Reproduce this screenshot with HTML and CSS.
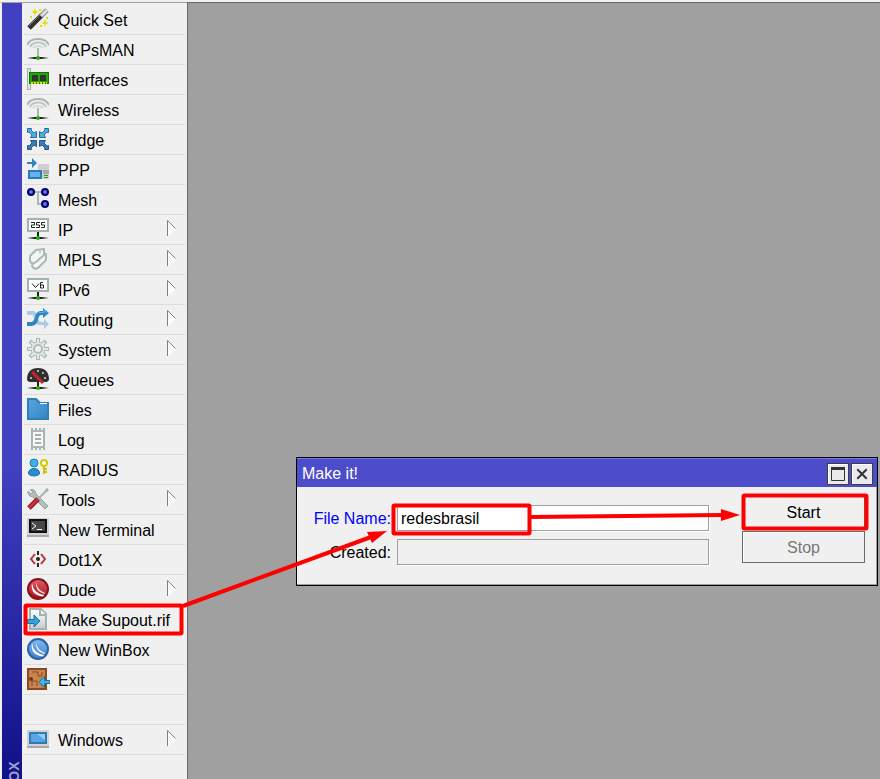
FILE: index.html
```
<!DOCTYPE html>
<html lang="en">
<head>
  <meta charset="UTF-8">
  <meta name="viewport" content="width=device-width, initial-scale=1.0">
  <title>WinBox - Make Supout.rif</title>
  <link rel="stylesheet" href="styles.css">
</head>
<body>
  <!-- shared shapes -->
  <svg class="defs" aria-hidden="true">
    <defs>
      <linearGradient id="base" x1="0" x2="1" y1="0" y2="0">
        <stop offset="0" stop-color="#222" stop-opacity="0"/>
        <stop offset=".35" stop-color="#222"/>
        <stop offset=".65" stop-color="#222"/>
        <stop offset="1" stop-color="#222" stop-opacity="0"/>
      </linearGradient>
      <linearGradient id="blue" x1="0" x2="1" y1="0" y2="1">
        <stop offset="0" stop-color="#5aa5e0"/>
        <stop offset="1" stop-color="#3484c4"/>
      </linearGradient>
      <linearGradient id="paper" x1="0" x2="0" y1="0" y2="1">
        <stop offset="0" stop-color="#fff"/>
        <stop offset="1" stop-color="#c4cccb"/>
      </linearGradient>
      <radialGradient id="node">
        <stop offset="0" stop-color="#9aa0ff"/>
        <stop offset=".5" stop-color="#3038b0"/>
        <stop offset=".6" stop-color="#000070"/>
        <stop offset="1" stop-color="#000070"/>
      </radialGradient>
      <linearGradient id="redball" x1="0" x2="0" y1="0" y2="1">
        <stop offset="0" stop-color="#e0606c"/>
        <stop offset="1" stop-color="#a80c1c"/>
      </linearGradient>
      <linearGradient id="blueball" x1="0" x2="0" y1="0" y2="1">
        <stop offset="0" stop-color="#84b8f0"/>
        <stop offset="1" stop-color="#3c80d0"/>
      </linearGradient>
      <symbol id="stand" viewBox="0 0 22 22">
        <rect x="0" y="19" width="22" height="2" fill="url(#base)"/>
        <circle cx="11" cy="20" r="2" fill="#1fae0c"/>
      </symbol>
      <symbol id="antenna" viewBox="0 0 22 22">
        <path d="M0 7Q3 1 11 1T22 7" fill="none" stroke="#a9b5b3" stroke-width="2"/>
        <path d="M3 9Q5 4.500 11 4.500T19 9" fill="none" stroke="#bcc6c4" stroke-width="2"/>
        <path d="M6 10Q8 8 11 8T16 10" fill="none" stroke="#d5dad9" stroke-width="2"/>
        <path d="M11 10v9" stroke="#a9b8b4" stroke-width="2"/>
        <use href="#stand"/>
      </symbol>
      <symbol id="swirl" viewBox="0 0 22 22">
        <path d="M5 5Q6 15 17 17L16 18.500Q3 17 5 5Z" fill="#fff"/>
        <path d="M9 4Q10 12 18 15L17.500 16Q8 13.500 9 4Z" fill="#fff" opacity=".9"/>
      </symbol>
      <symbol id="arrow" viewBox="0 0 9 17">
        <path d="M1 1L9 9L1 16Z" fill="#fcfcfc"/>
        <path d="M.5 16V.5L8.500 8.500" fill="none" stroke="#808080"/>
      </symbol>
    </defs>
  </svg>

  <div class="app">
    <aside class="rail"><span class="rail-name">WINBOX</span></aside>

    <nav class="menu">
      <a class="item" href="#">
        <svg class="icon" viewBox="0 0 22 22"><path d="M2 20L15 7" stroke="#303030" stroke-width="5"/><path d="M2 18L14 6" stroke="#777" stroke-width="1"/><path d="M14 8L20 2" stroke="#888" stroke-width="5"/><path d="M14 8L20 2" stroke="#dedede" stroke-width="3"/><path d="M8 0l1 3 3 1-3 1-1 3-1-3-3-1 3-1ZM18 11l1 3 3 1-3 1-1 3-1-3-3-1 3-1Z" fill="#dce000"/><path d="M12 1h2v2h-2ZM3 8h2v2h-2ZM19 9h2v2h-2ZM13 17h2v2h-2Z" fill="#dce000"/></svg>
        <span class="label">Quick Set</span>
      </a>
      <a class="item" href="#">
        <svg class="icon"><use href="#antenna"/></svg>
        <span class="label">CAPsMAN</span>
      </a>
      <a class="item" href="#">
        <svg class="icon" viewBox="0 0 22 22"><rect x=".5" y=".5" width="3" height="21" fill="#e0e5e4" stroke="#a4b2af"/><rect x="2.500" y="4.500" width="19" height="11" fill="#20a40c" stroke="#107800"/><path d="M5 7h6v6H5ZM13 7h6v6h-6Z" fill="#333"/><path d="M4 15h16" stroke="#e5d820" stroke-width="2" stroke-dasharray="2 1"/></svg>
        <span class="label">Interfaces</span>
      </a>
      <a class="item" href="#">
        <svg class="icon"><use href="#antenna"/></svg>
        <span class="label">Wireless</span>
      </a>
      <a class="item" href="#">
        <svg class="icon" viewBox="0 0 22 22"><g fill="#4ab0e8" stroke="#2a6b9c"><path d="M.5.5H4.500L4 2L7 5L9.500 3.500V9.500H3.500L5 7L2 4L.5 4.500Z"/><path d="M21.500.5H17.500L18 2L15 5L12.500 3.500V9.500H18.500L17 7L20 4L21.500 4.500Z"/></g><g fill="#3a7cb4" stroke="#245a88"><path d="M.5 21.500H4.500L4 20L7 17L9.500 18.500V12.500H3.500L5 15L2 18L.5 17.500Z"/><path d="M21.500 21.500H17.500L18 20L15 17L12.500 18.500V12.500H18.500L17 15L20 18L21.500 17.500Z"/></g></svg>
        <span class="label">Bridge</span>
      </a>
      <a class="item" href="#">
        <svg class="icon" viewBox="0 0 22 22"><path d="M11 6h11v15H11Z" fill="#d0d0d0"/><path d="M16 12h6v4h-6Z" fill="#a8a8a8"/><path d="M17 17.500h4M17 19.500h4" stroke="#20a010" stroke-width="1"/><path d="M0 4h5V0l5 5-5 5V6H0Z" fill="#2f86bd"/><rect x="1" y="12" width="14" height="9" fill="#2d7cb1"/><rect x="3" y="14" width="10" height="5" fill="#65b1ee"/></svg>
        <span class="label">PPP</span>
      </a>
      <a class="item" href="#">
        <svg class="icon" viewBox="0 0 22 22"><path d="M4 4h14M11 4v12h7" fill="none" stroke="#aab9b5" stroke-width="2"/><g fill="url(#node)"><circle cx="4" cy="4" r="4"/><circle cx="18" cy="4" r="4"/><circle cx="18" cy="16" r="4"/></g></svg>
        <span class="label">Mesh</span>
      </a>
      <a class="item" href="#">
        <svg class="icon" viewBox="0 0 22 22"><rect x="1" y="1" width="20" height="12" fill="#fff" stroke="#a4b3af" stroke-width="2"/><path d="M4 4.500h3.500v2.500h-3v2.500H8M13 4.500H9.500v2.500H12.500v2.500H9M18 4.500H14.500v2.500h3v2.500H14" fill="none" stroke="#222"/><path d="M11 14v5" stroke="#222" stroke-width="2"/><use href="#stand"/></svg>
        <span class="label">IP</span>
        <svg class="sub"><use href="#arrow"/></svg>
      </a>
      <a class="item" href="#">
        <svg class="icon" viewBox="0 0 22 22"><g fill="#f4f6f6" stroke="#a9b8b4" stroke-width="2" stroke-linejoin="round"><path d="M7 12L14 5L19 6V12L12 19Q8 23 5 18Z"/><path d="M3 8L9 2L17 1V7L9 14Q5 17 3 13Z"/></g><circle cx="13" cy="4" r="1" fill="#a9b8b4"/></svg>
        <span class="label">MPLS</span>
        <svg class="sub"><use href="#arrow"/></svg>
      </a>
      <a class="item" href="#">
        <svg class="icon" viewBox="0 0 22 22"><rect x="1" y="1" width="20" height="12" fill="#fff" stroke="#a4b3af" stroke-width="2"/><path d="M5 5.500l3.500 4 3.500-4M16 4.500H13.500v5.500H16.500V7H13.500" fill="none" stroke="#222"/><path d="M11 14v5" stroke="#222" stroke-width="2"/><use href="#stand"/></svg>
        <span class="label">IPv6</span>
        <svg class="sub"><use href="#arrow"/></svg>
      </a>
      <a class="item" href="#">
        <svg class="icon" viewBox="0 0 22 22"><path d="M0 3H6Q9 3 10 8T14 14H17V11L22 16L17 21V17H13Q8 17 7 11T4 7H0Z" fill="#a9cbe3"/><path d="M0 14H4Q7 14 8 9T13 3H16V0L22 5L16 10V7H14Q12 7 11 12T5 18H0Z" fill="#2c86c4"/><path d="M12 4.500H17V2L20 5" fill="none" stroke="#4bb8ef"/></svg>
        <span class="label">Routing</span>
        <svg class="sub"><use href="#arrow"/></svg>
      </a>
      <a class="item" href="#">
        <svg class="icon" viewBox="0 0 22 22"><g stroke="#a9b8b5" stroke-width="4"><path d="M11 0v22M0 11h22M3 3l16 16M19 3L3 19"/></g><circle cx="11" cy="11" r="7" fill="#e4e9e8" stroke="#a9b8b5"/><g stroke="#e4e9e8" stroke-width="2"><path d="M11 1v20M1 11h20M4 4l14 14M18 4L4 18"/></g><circle cx="11" cy="11" r="4" fill="#f0f0f0" stroke="#b0bdba" stroke-width="2"/></svg>
        <span class="label">System</span>
        <svg class="sub"><use href="#arrow"/></svg>
      </a>
      <a class="item" href="#">
        <svg class="icon" viewBox="0 0 22 22"><path d="M0 12Q0 0 11 0T22 12L20 14H2Z" fill="#303030"/><g fill="#ddd"><circle cx="4" cy="10" r="1"/><circle cx="11" cy="3" r="1"/><circle cx="16" cy="5" r="1"/><circle cx="18" cy="10" r="1"/></g><path d="M5 4L16 15" stroke="#d02028" stroke-width="3"/><path d="M11 14v5" stroke="#222" stroke-width="2"/><use href="#stand"/></svg>
        <span class="label">Queues</span>
      </a>
      <a class="item" href="#">
        <svg class="icon" viewBox="0 0 22 22"><path d="M1 1H9L13 5H21V21H1Z" fill="url(#blue)" stroke="#2f7fb8" stroke-width="2"/><path d="M13 5.500h7" stroke="#fff" stroke-width="1"/></svg>
        <span class="label">Files</span>
      </a>
      <a class="item" href="#">
        <svg class="icon" viewBox="0 0 22 22"><path d="M4 2H18V20H4Z" fill="#a8b7b3"/><path d="M5 0v3M9 0v3M13 0v3M17 0v3M5 19v3M9 19v3M13 19v3M17 19v3" stroke="#a8b7b3" stroke-width="2"/><path d="M6 4H16V18H6Z" fill="#fafafa"/><path d="M8 7h6M8 11h6M8 15h6" stroke="#a0b0ac" stroke-width="2"/></svg>
        <span class="label">Log</span>
      </a>
      <a class="item" href="#">
        <svg class="icon" viewBox="0 0 22 22"><circle cx="7" cy="5" r="4" fill="#35b4ef" stroke="#2478b0"/><path d="M1.500 15Q2 10.500 7 10.500T12.500 15V16Q11 18 7 18T1.500 16Z" fill="#2b8bd0" stroke="#2470a8"/><circle cx="17" cy="5" r="3" fill="#fff" stroke="#d6c900" stroke-width="2"/><path d="M17 8v8M17 11h3M17 14h3" stroke="#d0c000" stroke-width="2"/></svg>
        <span class="label">RADIUS</span>
      </a>
      <a class="item" href="#">
        <svg class="icon" viewBox="0 0 22 22"><path d="M3 2Q8 0 9 6L21 18L18 21L6 9Q0 8 1 3L4 6L6 4Z" fill="#b0bfbc" stroke="#93a5a1" stroke-width="1"/><path d="M10 12L20 2" stroke="#a4b4b0" stroke-width="2"/><path d="M19 1L21 3" stroke="#a4b4b0" stroke-width="3"/><path d="M2 20L11 11" stroke="#8c1420" stroke-width="5"/><path d="M2 20L11 11" stroke="#c8303c" stroke-width="3"/></svg>
        <span class="label">Tools</span>
        <svg class="sub"><use href="#arrow"/></svg>
      </a>
      <a class="item" href="#">
        <svg class="icon" viewBox="0 0 22 22"><path d="M0 0H22V17H0Z" fill="#d2d2d2"/><path d="M0 17H22V19H0Z" fill="#a8a8a8"/><rect x="3" y="2" width="16" height="12" fill="#484848" stroke="#101010" stroke-width="2"/><path d="M5 5l4 3-4 3M10 11.500h5" fill="none" stroke="#fff"/></svg>
        <span class="label">New Terminal</span>
      </a>
      <a class="item" href="#">
        <svg class="icon" viewBox="0 0 22 22"><path d="M8 6L4 11L8 16M14 6L18 11L14 16" fill="none" stroke="#b8323c" stroke-width="2"/><path d="M11 3v4M11 15v4" stroke="#222" stroke-width="2"/><circle cx="11" cy="11" r="2" fill="#222"/></svg>
        <span class="label">Dot1X</span>
      </a>
      <a class="item" href="#">
        <svg class="icon" viewBox="0 0 22 22"><circle cx="11" cy="11" r="10" fill="url(#redball)" stroke="#861018" stroke-width="2"/><use href="#swirl"/></svg>
        <span class="label">Dude</span>
        <svg class="sub"><use href="#arrow"/></svg>
      </a>
      <a class="item" href="#">
        <svg class="icon" viewBox="0 0 22 22"><path d="M3 1H14L19 6V21H3Z" fill="url(#paper)" stroke="#a3b2ae" stroke-width="2"/><path d="M13 1V7H19" fill="#fff" stroke="#a3b2ae" stroke-width="2"/><path d="M.5 11.500H7V7L13 13L7 19V15.500H.5Z" fill="#2fa4e0" stroke="#236f9e"/></svg>
        <span class="label">Make Supout.rif</span>
      </a>
      <a class="item" href="#">
        <svg class="icon" viewBox="0 0 22 22"><circle cx="11" cy="11" r="10" fill="url(#blueball)" stroke="#2c62a0" stroke-width="2"/><use href="#swirl"/></svg>
        <span class="label">New WinBox</span>
      </a>
      <a class="item" href="#">
        <svg class="icon icon-exit" viewBox="0 0 22 22"><rect x="1" y="1" width="18" height="20" fill="#c58450" stroke="#8a4a20" stroke-width="2"/><path d="M5 4h6v4h4V4M5 18V13h5v5M15 18v-3" fill="none" stroke="#8a4a20"/><circle cx="4" cy="11" r="2" fill="#70380f"/><path d="M22.500 12.500H17.500V8.500L12 14L17.500 19.500V15.500H22.500Z" fill="#3ab8f4" stroke="#236f9e"/></svg>
        <span class="label">Exit</span>
      </a>
      <div class="item"></div>
      <a class="item" href="#">
        <svg class="icon" viewBox="0 0 22 22"><path d="M0 2H22V18H0Z" fill="#d2d2d2"/><path d="M0 18H22V20H0Z" fill="#a8a8a8"/><rect x="3" y="5" width="16" height="10" fill="#5aa5e4" stroke="#2b7cb5" stroke-width="2"/><path d="M10 6H18V12Z" fill="#98cbf2"/></svg>
        <span class="label">Windows</span>
        <svg class="sub"><use href="#arrow"/></svg>
      </a>
    </nav>

    <main class="desktop">
      <form class="window">
        <div class="titlebar">
          <h1 class="title">Make it!</h1>
          <button class="tool" type="button" aria-label="Maximize">
            <svg class="tool-icon" viewBox="0 0 14 14"><path d="M.5 1V13.500H13.500V1" fill="none" stroke="#333"/><path d="M0 1.500H14" stroke="#333" stroke-width="3"/></svg>
          </button>
          <button class="tool" type="button" aria-label="Close">
            <svg class="tool-icon" viewBox="0 0 14 14"><path d="M3 3L11 11M11 3L3 11" stroke="#333" stroke-width="2" stroke-linecap="square"/></svg>
          </button>
        </div>
        <div class="content">
          <div class="fields">
            <label class="changed" for="file-name">File Name:</label>
            <input id="file-name" type="text" value="redesbrasil">
            <label for="created">Created:</label>
            <input id="created" type="text" readonly>
          </div>
          <div class="actions">
            <button class="action" type="button">Start</button>
            <button class="action" type="button" disabled>Stop</button>
          </div>
        </div>
      </form>
    </main>
  </div>

  <!-- step markers over the interface -->
  <svg class="marks" width="880" height="779" aria-hidden="true">
    <g fill="none" stroke="#fe0000" stroke-width="4">
      <rect x="25.500" y="605.500" width="156" height="28" rx="1"/>
      <rect x="393.500" y="505.500" width="136" height="28" rx="1"/>
      <rect x="743.500" y="495.500" width="123" height="33" rx="1"/>
      <path d="M183 606L371 537M530 517L722 515"/>
    </g>
    <path d="M387 531L367 532L372 543ZM740 515L721 509V521Z" fill="#fe0000"/>
  </svg>
</body>
</html>
```
FILE: styles.css
```
* {
  box-sizing: border-box;
}
body {
  margin: 0;
  font-family: "Liberation Sans", Arial, sans-serif;
  font-size: 16px;
  line-height: 20px;
  color: #000;
  background: #f0f0f0;
  overflow: hidden;
}
.defs {
  position: absolute;
  width: 0;
  height: 0;
}
.app {
  display: flex;
  height: 100vh;
  padding-top: 2px;
}
.rail {
  width: 22px;
  flex: none;
  display: flex;
  justify-content: flex-end;
  overflow: hidden;
  border-top: 1px solid #a0a0a0;
  border-left: 2px solid #f0f0f0;
  background: linear-gradient(#4040c0 60%, #101088);
}
.rail-name {
  writing-mode: vertical-rl;
  transform: rotate(180deg);
  margin-top: 758px;
  height: 140px;
  text-align: right;
  font-weight: bold;
  font-size: 14px;
  line-height: 16px;
  white-space: nowrap;
  color: #a0a0c8;
}
.menu {
  width: 165px;
  flex: none;
  padding: 2px 2px 0;
  border-top: 1px solid #a0a0a0;
}
.item {
  display: flex;
  align-items: flex-start;
  height: 30px;
  padding: 3px 9px 0 3px;
  border-bottom: 1px solid #dcdcdc;
  color: #000;
  text-decoration: none;
}
.icon {
  width: 22px;
  height: 22px;
  flex: none;
}
.icon-exit {
  overflow: visible;
}
.label {
  flex: 1;
  margin: 3px 0 0 9px;
  white-space: nowrap;
}
.sub {
  width: 9px;
  height: 17px;
  margin-top: 2px;
}
.desktop {
  position: relative;
  flex: 1;
  border-top: 1px solid #696969;
  border-left: 1px solid #696969;
  background: #a0a0a0;
}
.window {
  position: absolute;
  left: 108px;
  top: 454px;
  width: 582px;
  border: 1px solid #000;
  background: #f0f0f0;
  box-shadow: inset -1px -1px #a0a0a0;
}
.titlebar {
  display: flex;
  align-items: center;
  gap: 2px;
  height: 29px;
  padding: 1px 4px 0 5px;
  border-top: 1px solid #7c7ce0;
  background: #4d4dcb;
}
.title {
  flex: 1;
  margin: 0;
  padding-top: 1px;
  font-size: 16px;
  line-height: 20px;
  font-weight: normal;
  color: #fff;
}
.tool {
  display: flex;
  align-items: center;
  justify-content: center;
  width: 22px;
  height: 22px;
  padding: 0;
  border: 1px solid #404040;
  background: #ece9ec;
  box-shadow: inset 1px 1px #fff;
}
.tool-icon {
  width: 14px;
  height: 14px;
}
.content {
  display: flex;
  gap: 33px;
  padding: 9px 12px 20px 16px;
}
.fields {
  flex: 1;
  display: grid;
  grid-template-columns: 78px 1fr;
  grid-auto-rows: 26px;
  gap: 8px 6px;
  padding-top: 9px;
}
.fields label {
  padding-top: 4px;
  text-align: right;
  white-space: nowrap;
}
.fields .changed {
  color: #0000ff;
}
.fields input {
  width: 100%;
  height: 26px;
  padding: 2px 3px 0;
  border: 1px solid #a0a0a0;
  background: #fff;
  box-shadow: 1px 1px #fff;
  font: inherit;
  color: #000;
}
.fields input[readonly] {
  background: #f0f0f0;
}
.actions {
  width: 123px;
  display: flex;
  flex-direction: column;
  gap: 3px;
}
.action {
  height: 32px;
  padding: 2px 0 0;
  border: 1px solid #696969;
  background: #f0f0f0;
  box-shadow: inset 1px 1px #fff;
  font: inherit;
  color: #000;
}
.action:disabled {
  color: #787878;
}
.marks {
  position: absolute;
  left: 0;
  top: 0;
  pointer-events: none;
}
```
